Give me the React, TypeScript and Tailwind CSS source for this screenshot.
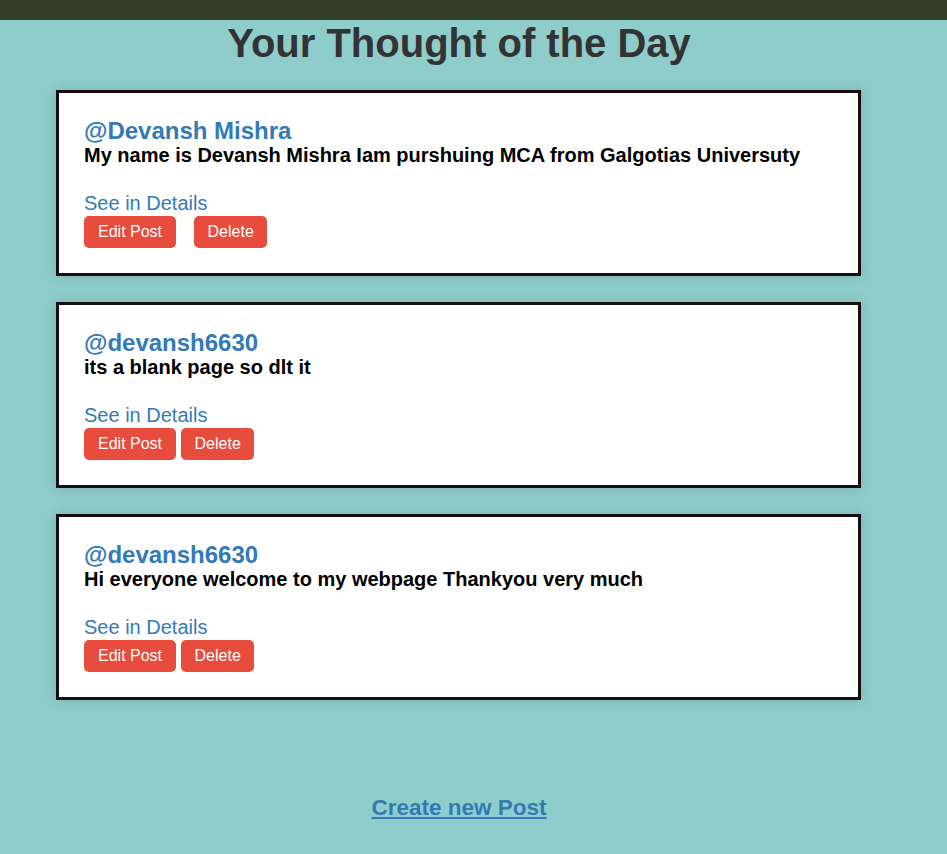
import React from "react";

type Post = { user: string; body: string; wideGap?: boolean };

const posts: Post[] = [
  {
    user: "@Devansh Mishra",
    body: "My name is Devansh Mishra Iam purshuing MCA from Galgotias Universuty",
    wideGap: true,
  },
  { user: "@devansh6630", body: "its a blank page so dlt it" },
  { user: "@devansh6630", body: "Hi everyone welcome to my webpage Thankyou very much" },
];

function Card({ p }: { p: Post }) {
  return (
    <div className="w-[805px] ml-[56px] border-[3px] border-[#1a0d0d] bg-white pl-[25px] pr-[24px] pt-[25px] pb-[25px] shadow-[0_0_12px_rgba(0,0,0,0.15)]">
      <div className="text-[24px] font-bold leading-[26px] text-[#337ab7]">{p.user}</div>
      <div className="text-[20px] font-bold leading-[23px] text-black">{p.body}</div>
      <div className="mt-[25px] text-[20px] leading-[23px] text-[#337ab7]">See in Details</div>
      <div className="mt-[1px] flex">
        <button className="h-[32px] rounded-[5px] bg-[#e74c3c] px-[14px] text-[16px] text-white">
          Edit Post
        </button>
        <button
          className={
            (p.wideGap ? "ml-[18px] " : "ml-[5px] ") +
            "h-[32px] rounded-[5px] bg-[#e74c3c] px-[13.5px] text-[16px] text-white"
          }
        >
          Delete
        </button>
      </div>
    </div>
  );
}

export default function App() {
  return (
    <div
      className="min-h-[854px] w-full bg-[#8fcdcb]"
      style={{ fontFamily: '"Liberation Sans", Arial, sans-serif' }}
    >
      <div className="h-[20px] w-full bg-[#323d2a]" />
      <div className="w-[918px]">
        <h1 className="mt-[3px] text-center text-[40px] font-bold leading-[40px] text-[#333333]">
          Your Thought of the Day
        </h1>
        <div className="mt-[27px] flex flex-col gap-[26px]">
          {posts.map((p, i) => (
            <Card key={i} p={p} />
          ))}
        </div>
        <div className="mt-[95px] text-center">
          <a
            href="#"
            className="text-[22.5px] font-bold leading-[25.3px] text-[#337ab7] underline"
          >
            Create new Post
          </a>
        </div>
      </div>
    </div>
  );
}
